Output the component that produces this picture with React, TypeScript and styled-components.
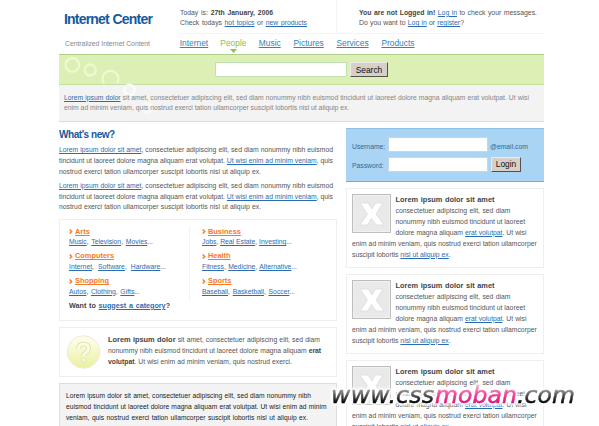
import React from 'react';
import styled, { createGlobalStyle } from 'styled-components';

const GlobalStyle = createGlobalStyle`
  * { box-sizing: border-box; }
  html, body { margin: 0; height: 426px; overflow: hidden; background: #fff; }
  body { font: 7px/10.8px "Liberation Sans", Arial, sans-serif; color: #555; }
`;

const Page = styled.div`
  position: relative;
  width: 599px;
  height: 426px;
  overflow: hidden;
  padding-left: 59px;
`;
const Shell = styled.div`width: 485px;`;

const Line = styled.div<{ $w: number; $color?: string; $size?: number; $h?: number; $bold?: boolean }>`
  width: ${p => p.$w}px;
  height: ${p => p.$h ?? 10.8}px;
  line-height: ${p => p.$h ?? 10.8}px;
  font-size: ${p => p.$size ?? 6.8}px;
  font-weight: ${p => (p.$bold ? 700 : 400)};
  color: ${p => p.$color ?? 'inherit'};
  white-space: nowrap;
  text-align: justify;
  text-align-last: justify;
`;
const Link = styled.a`
  color: #2c6cb0;
  text-decoration: underline;
  text-decoration-thickness: 1px;
  text-underline-offset: 1px;
`;
const Strong = styled.b`color: #444;`;
const Lead = styled(Strong)`font-size: 7.4px;`;

const Header = styled.header`
  display: grid;
  grid-template-columns: 121px 156px 208px;
  grid-template-rows: 33px 21px;
  height: 54px;
`;
const Logo = styled.h1`
  margin: 0;
  padding: 10px 0 0 5px;
  font-size: 14px;
  line-height: 19px;
  letter-spacing: -0.8px;
  word-spacing: 0.5px;
  white-space: nowrap;
  color: #135a9f;
`;
const HeaderInfo = styled.div<{ $divided?: boolean }>`
  padding: 7.5px 0 0 ${p => (p.$divided ? 22 : 0)}px;
  border-bottom: 1px solid #f3f3f3;
  border-left: ${p => (p.$divided ? '1px solid #f3f3f3' : '0')};
  height: 34px;
`;
const Tagline = styled.div`padding: 6px 0 0 6px; color: #888;`;
const Nav = styled.nav`
  grid-column: 2 / 4;
  display: flex;
  align-items: flex-start;
  gap: 12.4px;
  padding-top: 4px;
`;
const NavItem = styled.a<{ $w: number; $active?: boolean }>`
  display: flex;
  flex-direction: column;
  align-items: center;
  width: ${p => p.$w}px;
  font-size: 8.4px;
  line-height: 12px;
  white-space: nowrap;
  color: ${p => (p.$active ? '#8bc34a' : '#2d86bb')};
  text-decoration: ${p => (p.$active ? 'none' : 'underline')};
  text-underline-offset: 1px;
`;

const SearchBar = styled.section`
  position: relative;
  display: flex;
  height: 31px;
  padding: 7px 0 0 156px;
  gap: 3px;
  background: #dcefb5;
  border-top: 1px solid #acd084;
  border-bottom: 1px solid #c5dfa0;
`;
const Bubbles = styled.svg`
  position: absolute;
  left: 0;
  top: 0;
  z-index: 1;
`;
const Field = styled.input<{ $w: number; $edge: string }>`
  width: ${p => p.$w}px;
  height: 15px;
  padding: 0 2px;
  border: 1px solid ${p => p.$edge};
  border-radius: 1px;
  background: #fff;
  font-size: 8px;
`;
const Button = styled.button<{ $w: number }>`
  width: ${p => p.$w}px;
  height: 15px;
  padding: 0;
  border: 1px solid;
  border-color: #eeebe5 #55524d #55524d #eeebe5;
  background: #d6d0c8;
  color: #111;
  font: 8.4px/12px "Liberation Sans", Arial, sans-serif;
`;
const Intro = styled.section`
  height: 37px;
  padding: 7.5px 0 0 5px;
  background: #f3f3f3;
  border-bottom: 1px solid #ddd;
  color: #858585;
`;
const IntroText = styled.div`position: relative; z-index: 2;`;

const Columns = styled.div`
  display: grid;
  grid-template-columns: 278px 198px;
  gap: 9px;
  padding-top: 6px;
`;
const Heading = styled.h2`
  margin: 0 0 4px;
  font-size: 10px;
  line-height: 13px;
  letter-spacing: -0.45px;
  color: #135a9f;
`;
const Paragraph = styled.div`height: 35.8px;`;
const Directory = styled.section`
  height: 102px;
  margin-top: 2.4px;
  padding: 6px 0 0 9px;
  border: 1px solid #eee;
`;
const Categories = styled.div`
  display: grid;
  grid-template-columns: 120px 1fr;
  grid-auto-rows: 24.8px;
`;
const Category = styled.div<{ $right?: boolean }>`
  padding-left: ${p => (p.$right ? 12 : 0)}px;
  border-left: ${p => (p.$right ? '1px solid #f3f3f3' : '0')};
`;
const CategoryTitle = styled.div`
  display: flex;
  align-items: center;
  gap: 2px;
  height: 12px;
  margin-bottom: -1px;
`;
const TitleLink = styled(Link)`color: #f47a2a;`;
const Suggest = styled.div`padding-top: 0.3px; color: #444;`;

const Tip = styled.section`
  display: flex;
  gap: 7px;
  height: 50px;
  margin-top: 6px;
  padding: 7px 0 0 6px;
  border: 1px solid #eee;
`;
const TipText = styled.div`padding-top: 0.5px;`;
const Notice = styled.section`
  height: 60px;
  margin-top: 6px;
  padding: 7px 0 0 6px;
  border: 1px solid #ddd;
  background: #f3f3f3;
  color: #222;
`;

const Login = styled.form`
  height: 54px;
  margin: 0;
  padding: 8px 0 0 6px;
  background: #a9d4f3;
  border-top: 1px solid #8fc1e7;
  border-bottom: 1px solid #76acd8;
`;
const LoginRow = styled.div`
  display: flex;
  align-items: flex-start;
  height: 19.5px;
  color: #2f6a95;
`;
const LoginLabel = styled.label`width: 36px; padding-top: 4.5px; flex: none;`;
const Mail = styled.span`padding: 4.5px 0 0 2px;`;
const LoginButton = styled.div`padding-left: 3px;`;
const Card = styled.article`
  height: 80px;
  margin-top: 6px;
  padding: 5px 0 0 5px;
  border: 1px solid #eee;
`;
const CardTop = styled.div`display: flex; gap: 4.5px; height: 45px;`;
const CardText = styled.div`padding-top: 1.3px;`;
const Watermark = styled.svg`
  position: absolute;
  left: 320px;
  top: 374px;
  z-index: 5;
  filter: drop-shadow(0 0 1px #fff) drop-shadow(0 0 1px #fff) drop-shadow(0 0 1px #fff) drop-shadow(0 0 1px #fff);
`;

const Thumb = () => (
  <svg width="39" height="39" viewBox="0 0 39 39">
    <rect x=".5" y=".5" width="38" height="38" fill="#e9e9e9" stroke="#bdbdbd" />
    <rect x="1.5" y="1.5" width="36" height="36" fill="none" stroke="#f1f1f1" />
    <path d="M8 9h8l4 6 3.500-6H31l-7 11 8 11h-8l-4.500-6.500L15.500 31H8l7.500-11z" fill="#fff" stroke="#dcdcdc" strokeWidth=".8" />
  </svg>
);

const Arrow = () => (
  <svg width="4" height="5" viewBox="0 0 4 5">
    <path d="M.7 .5l2 2-2 2" fill="none" stroke="#f47a2a" strokeWidth="1.400" />
  </svg>
);

const QuestionBadge = () => (
  <svg width="35" height="35" viewBox="0 0 35 35">
    <defs>
      <linearGradient id="badge" x1="0" y1="0" x2="0" y2="1">
        <stop offset="0" stopColor="#fdfdf0" />
        <stop offset=".5" stopColor="#f6f8c8" />
        <stop offset="1" stopColor="#eaf0a0" />
      </linearGradient>
    </defs>
    <circle cx="17.500" cy="17" r="16.300" fill="url(#badge)" stroke="#ececdc" />
    <path d="M12.500 14q0-5 5-5t5 4.500q0 3-3 4.500-2 1-2 3" fill="none" stroke="#d9dda8" strokeWidth="4.500" />
    <path d="M12.500 14q0-5 5-5t5 4.500q0 3-3 4.500-2 1-2 3" fill="none" stroke="#fbfce6" strokeWidth="3" />
    <circle cx="17.500" cy="25" r="2" fill="#fbfce6" stroke="#d9dda8" strokeWidth=".7" />
  </svg>
);

type Entry = { title: string; tw: number; links: string[]; w: number };
const categories: Entry[] = [
  { title: 'Arts', tw: 15, links: ['Music', 'Television', 'Movies'], w: 84 },
  { title: 'Business', tw: 33, links: ['Jobs', 'Real Estate', 'Investing'], w: 89 },
  { title: 'Computers', tw: 40, links: ['Internet', 'Software', 'Hardware'], w: 97 },
  { title: 'Health', tw: 22, links: ['Fitness', 'Medicine', 'Alternative'], w: 95 },
  { title: 'Shopping', tw: 33, links: ['Autos', 'Clothing', 'Gifts'], w: 71 },
  { title: 'Sports', tw: 23, links: ['Baseball', 'Basketball', 'Soccer'], w: 93 },
];

const nav = [
  { label: 'Internet', w: 28 },
  { label: 'People', w: 26, active: true },
  { label: 'Music', w: 22 },
  { label: 'Pictures', w: 31 },
  { label: 'Services', w: 32 },
  { label: 'Products', w: 34 },
];

const InfoCard = () => (
  <Card>
    <CardTop>
      <Thumb />
      <CardText>
        <Line $w={99} $bold $size={7.4} $color="#444">Lorem ipsum dolor sit amet</Line>
        <Line $w={115}>consectetuer adipiscing elit, sed diam</Line>
        <Line $w={129}>nonummy nibh euismod tincidunt ut laoreet</Line>
        <Line $w={131}>dolore magna aliquam <Link>erat volutpat</Link>. Ut wisi</Line>
      </CardText>
    </CardTop>
    <Line $w={184}>enim ad minim veniam, quis nostrud exerci tation ullamcorper</Line>
    <Line $w={98}>suscipit lobortis <Link>nisl ut aliquip ex</Link>.</Line>
  </Card>
);

export default function App() {
  return (
    <Page>
      <GlobalStyle />
      <Shell>
        <Header>
          <Logo>Internet Center</Logo>
          <HeaderInfo>
            <Line $w={93}>Today is: <Strong>27th January, 2006</Strong></Line>
            <Line $w={127}>Check todays <Link>hot topics</Link> or <Link>new products</Link></Line>
          </HeaderInfo>
          <HeaderInfo $divided>
            <Line $w={178} $size={6.9}><Strong>You are not Logged in!</Strong> <Link>Log in</Link> to check your messages.</Line>
            <Line $w={105} $size={6.9}>Do you want to <Link>Log in</Link> or <Link>register</Link>?</Line>
          </HeaderInfo>
          <Tagline><Line $w={85}>Centralized Internet Content</Line></Tagline>
          <Nav>
            {nav.map(n => (
              <NavItem key={n.label} $w={n.w} $active={n.active}>
                {n.label}
                {n.active && (
                  <svg width="7" height="4" viewBox="0 0 7 4"><path d="M0 0h7L3.500 4z" fill="#8bc34a" /></svg>
                )}
              </NavItem>
            ))}
          </Nav>
        </Header>
        <SearchBar>
          <Bubbles width="110" height="66" viewBox="0 0 110 66" fill="none" stroke="#eff9cf" strokeWidth="2.300">
            <circle cx="13.300" cy="10" r="6.800" />
            <circle cx="31.300" cy="15" r="5.500" />
            <path d="M45 28.500a8 8 0 1 1 13 0" />
            <circle cx="70.500" cy="35" r="5" stroke="#fafafa" strokeWidth="3" />
            <circle cx="88" cy="53" r="4.500" stroke="#fafafa" strokeWidth="3" />
          </Bubbles>
          <Field $w={132} $edge="#bfe0b0" aria-label="Search" />
          <Button $w={38}>Search</Button>
        </SearchBar>
        <Intro>
          <IntroText>
            <Line $w={465}><Link>Lorem ipsum dolor</Link> sit amet, consectetuer adipiscing elit, sed diam nonummy nibh euismod tincidunt ut laoreet dolore magna aliquam erat volutpat. Ut wisi</Line>
            <Line $w={285}>enim ad minim veniam, quis nostrud exerci tation ullamcorper suscipit lobortis nisl ut aliquip ex.</Line>
          </IntroText>
        </Intro>
        <Columns>
          <main>
            <Heading>What's new?</Heading>
            {[0, 1].map(i => (
              <Paragraph key={i}>
                <Line $w={274}><Link>Lorem ipsum dolor sit amet</Link>, consectetuer adipiscing elit, sed diam nonummy nibh euismod</Line>
                <Line $w={274}>tincidunt ut laoreet dolore magna aliquam erat volutpat. <Link>Ut wisi enim ad minim veniam</Link>, quis</Line>
                <Line $w={202}>nostrud exerci tation ullamcorper suscipit lobortis nisl ut aliquip ex.</Line>
              </Paragraph>
            ))}
            <Directory>
              <Categories>
                {categories.map((c, i) => (
                  <Category key={c.title} $right={i % 2 === 1}>
                    <CategoryTitle>
                      <Arrow />
                      <Line $w={c.tw} $bold $size={7.4}><TitleLink>{c.title}</TitleLink></Line>
                    </CategoryTitle>
                    <Line $w={c.w}>
                      <Link>{c.links[0]}</Link>, <Link>{c.links[1]}</Link>, <Link>{c.links[2]}</Link>...
                    </Line>
                  </Category>
                ))}
              </Categories>
              <Suggest><Line $w={101} $bold $size={7.2}>Want to <Link>suggest a category</Link>?</Line></Suggest>
            </Directory>
            <Tip>
              <QuestionBadge />
              <TipText>
                <Line $w={212}><Lead>Lorem ipsum dolor</Lead> sit amet, consectetuer adipiscing elit, sed diam</Line>
                <Line $w={213}>nonummy nibh euismod tincidunt ut laoreet dolore magna aliquam <Strong>erat</Strong></Line>
                <Line $w={184}><Strong>volutpat</Strong>. Ut wisi enim ad minim veniam, quis nostrud exerci.</Line>
              </TipText>
            </Tip>
            <Notice>
              <Line $w={245} $size={6.7}>Lorem ipsum dolor sit amet, consectetuer adipiscing elit, sed diam nonummy nibh</Line>
              <Line $w={260.5} $size={6.7}>euismod tincidunt ut laoreet dolore magna aliquam erat volutpat. Ut wisi enim ad minim</Line>
              <Line $w={242} $size={6.7}>veniam, quis nostrud exerci tation ullamcorper suscipit lobortis nisl ut aliquip ex.</Line>
            </Notice>
          </main>
          <aside>
            <Login>
              <LoginRow>
                <LoginLabel><Line $w={33}>Username:</Line></LoginLabel>
                <Field $w={100} $edge="#c5d7e6" aria-label="Username" />
                <Mail><Line $w={37}>@email.com</Line></Mail>
              </LoginRow>
              <LoginRow>
                <LoginLabel><Line $w={33}>Password:</Line></LoginLabel>
                <Field $w={100} $edge="#c5d7e6" aria-label="Password" />
                <LoginButton><Button type="button" $w={30}>Login</Button></LoginButton>
              </LoginRow>
            </Login>
            <InfoCard />
            <InfoCard />
            <InfoCard />
          </aside>
        </Columns>
      </Shell>
      <Watermark width="270" height="40" viewBox="0 0 270 40">
        <defs>
          <linearGradient id="ink" gradientUnits="userSpaceOnUse" x1="0" y1="13" x2="0" y2="29">
            <stop offset="0" stopColor="#bbb" />
            <stop offset=".5" stopColor="#555" />
            <stop offset="1" stopColor="#000" />
          </linearGradient>
          <linearGradient id="rose" gradientUnits="userSpaceOnUse" x1="0" y1="11" x2="0" y2="29">
            <stop offset="0" stopColor="#f7b3d3" />
            <stop offset=".5" stopColor="#ee4c98" />
            <stop offset="1" stopColor="#e0107a" />
          </linearGradient>
        </defs>
        <g fontFamily="DejaVu Sans, sans-serif" fontStyle="italic" fontSize="23.500" strokeWidth=".5">
          <text x="11" y="29" fill="url(#ink)" stroke="url(#ink)" textLength="65">www.</text>
          <text x="76" y="29" fill="url(#ink)" stroke="url(#ink)" textLength="38">css</text>
          <text x="115" y="29" fill="url(#rose)" stroke="url(#rose)" textLength="82">moban</text>
          <text x="197" y="29" fill="url(#ink)" stroke="url(#ink)" textLength="58">.com</text>
        </g>
      </Watermark>
    </Page>
  );
}
